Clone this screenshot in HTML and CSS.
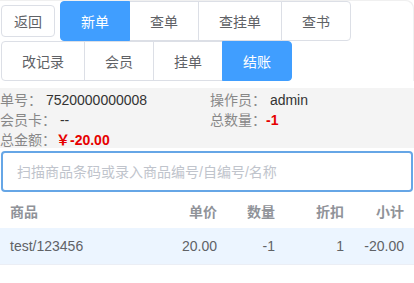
FILE: index.html
```html
<!DOCTYPE html>
<html lang="zh-CN">

<head>
  <meta charset="UTF-8">
  <meta name="viewport" content="width=device-width, initial-scale=1.0">
  <title>收银台</title>
  <link rel="stylesheet" href="styles.css">
</head>

<body>
  <div class="pos">
    <!-- Toolbar -->
    <div class="toolbar">
      <div class="tool-row">
        <button class="btn btn-small">返回</button>
        <div class="btn-group">
          <button class="btn btn-primary">新单</button>
          <button class="btn">查单</button>
          <button class="btn">查挂单</button>
          <button class="btn">查书</button>
        </div>
      </div>
      <div class="tool-row">
        <div class="btn-group">
          <button class="btn">改记录</button>
          <button class="btn">会员</button>
          <button class="btn">挂单</button>
          <button class="btn btn-primary">结账</button>
        </div>
      </div>
    </div>

    <!-- Order info -->
    <div class="order-info">
      <div class="info-item"><span class="label">单号：</span> 7520000000008</div>
      <div class="info-item"><span class="label">操作员：</span> admin</div>
      <div class="info-item"><span class="label">会员卡：</span> --</div>
      <div class="info-item"><span class="label">总数量：</span><span class="red">-1</span></div>
      <div class="info-item"><span class="label">总金额：</span><span class="red">￥-20.00</span></div>
    </div>

    <!-- Scan input -->
    <input class="scan-input" type="text" placeholder="扫描商品条码或录入商品编号/自编号/名称">

    <!-- Goods list -->
    <div class="goods">
      <div class="goods-row goods-head">
        <div>商品</div>
        <div>单价</div>
        <div>数量</div>
        <div>折扣</div>
        <div>小计</div>
      </div>
      <div class="goods-row goods-item">
        <div>test/123456</div>
        <div>20.00</div>
        <div>-1</div>
        <div>1</div>
        <div>-20.00</div>
      </div>
    </div>
  </div>
</body>

</html>
```

FILE: styles.css
```css
/* General */
body {
  margin: 0;
  background: #fff;
  font-family: 'Liberation Sans', 'Noto Sans CJK SC', sans-serif;
  font-size: 14px;
  color: #333;
}

.pos {
  width: 414px;
}

/* Toolbar */
.toolbar {
  padding-top: 1px;
  border-top-right-radius: 8px;
  box-shadow: inset -1px 1px 0 #f0f0f0;
}

.tool-row {
  display: flex;
  align-items: center;
  height: 40px;
  padding-left: 1px;
}

.btn {
  height: 40px;
  padding: 0 20px;
  font-family: inherit;
  font-size: 14px;
  color: #606266;
  background: #fff;
  border: 1px solid #dcdfe6;
  border-radius: 0;
  cursor: pointer;
}

.btn-small {
  height: 32px;
  padding: 0 12px;
  margin-right: 5px;
  border-radius: 4px;
}

.btn-group {
  display: flex;
}

.btn-group .btn + .btn {
  margin-left: -1px;
}

.btn-group .btn:first-child {
  border-radius: 4px 0 0 4px;
}

.btn-group .btn:last-child {
  border-radius: 0 4px 4px 0;
}

.btn-primary {
  color: #fff;
  background: #409eff;
  border-color: #409eff;
  position: relative;
}

/* Order info */
.order-info {
  display: grid;
  grid-template-columns: 210px 1fr;
  margin-top: 7px;
  padding: 2px 0 0;
  height: 58px;
  background: #f4f4f4;
  line-height: 20px;
}

.info-item .label {
  color: #888;
}

.red {
  color: #e60000;
  font-weight: bold;
}

/* Scan input */
.scan-input {
  display: block;
  box-sizing: border-box;
  width: 412px;
  height: 41px;
  margin: 3px 0 0 1px;
  padding: 0 14px;
  font-family: inherit;
  font-size: 14px;
  border: 2px solid #66a6e6;
  border-radius: 4px;
  outline: none;
}

.scan-input::placeholder {
  color: #c0c4cc;
}

/* Goods list */
.goods {
  margin-top: 1px;
}

.goods-row {
  display: grid;
  grid-template-columns: 1fr 77px 58px 69px 60px;
  align-items: center;
}

.goods-row div {
  padding: 0 10px;
  text-align: right;
}

.goods-row div:first-child {
  text-align: left;
}

.goods-head {
  height: 35px;
  font-weight: bold;
  color: #909399;
}

.goods-item {
  height: 36px;
  background: #ecf5ff;
  color: #606266;
  border-bottom: 1px solid #ebeef5;
}
```
